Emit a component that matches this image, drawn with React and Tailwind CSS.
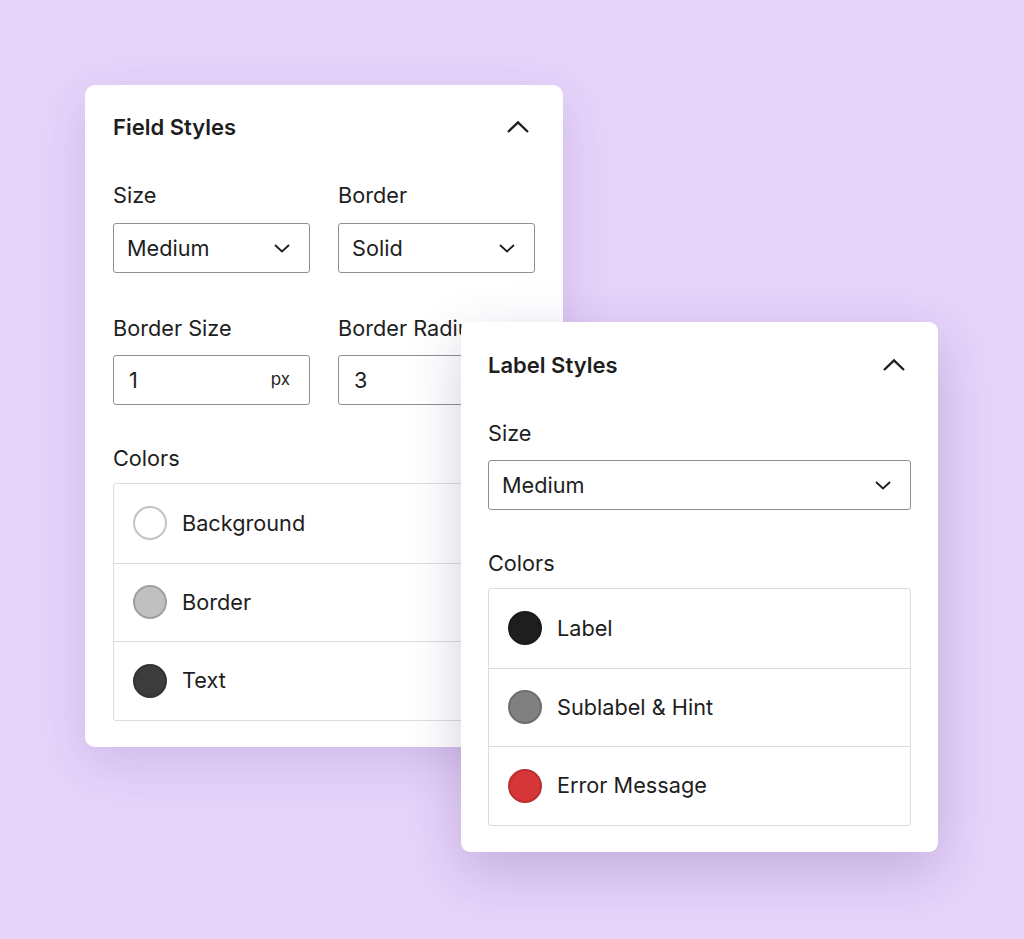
import React from "react";

const font = { fontFamily: "Inter, 'Noto Sans', sans-serif" };

function ChevronUp() {
  return (
    <svg width="24" height="24" viewBox="0 0 24 24" fill="none">
      <path d="M2 17 L12 7.5 L22 17" stroke="#1e1e1e" strokeWidth="2.4" />
    </svg>
  );
}

function ChevronDown() {
  return (
    <svg width="18" height="18" viewBox="0 0 18 18" fill="none">
      <path d="M2 6 L9 12.5 L16 6" stroke="#1e1e1e" strokeWidth="1.8" />
    </svg>
  );
}

function Header({ title }) {
  return (
    <div className="flex items-center justify-between h-[28px]">
      <span className="text-[22px] font-semibold text-[#1e1e1e] leading-[28px]">{title}</span>
      <span className="w-[34px] flex justify-center">
        <ChevronUp />
      </span>
    </div>
  );
}

function Label({ children, className = "" }) {
  return (
    <div className={"text-[21.7px] leading-[28px] text-[#1e1e1e] whitespace-nowrap " + className}>{children}</div>
  );
}

function Select({ value }) {
  return (
    <div className="h-[50px] border border-[#8c8f94] rounded-[3px] flex items-center justify-between pl-[13px] pr-[18px] bg-white">
      <span className="text-[21.7px] text-[#1e1e1e]">{value}</span>
      <ChevronDown />
    </div>
  );
}

function Input({ value, unit }) {
  return (
    <div className="h-[50px] border border-[#8c8f94] rounded-[3px] flex items-center justify-between pl-[15px] pr-[19px] bg-white">
      <span className="text-[21.7px] text-[#1e1e1e]">{value}</span>
      {unit && <span className="text-[17px] text-[#1e1e1e]">{unit}</span>}
    </div>
  );
}

function ColorList({ items }) {
  return (
    <div className="border border-[#dcdcde] rounded-[3px] flex flex-col">
      {items.map((it, i) => (
        <div
          key={it.label}
          className={
            "h-[78.5px] flex items-center pl-[19px] gap-[15px] " + (i > 0 ? "border-t border-[#dcdcde]" : "")
          }
        >
          <span
            className="w-[34px] h-[34px] rounded-full border-2"
            style={{ backgroundColor: it.bg, borderColor: it.border }}
          />
          <span className="text-[21.7px] text-[#1e1e1e]">{it.label}</span>
        </div>
      ))}
    </div>
  );
}

export default function App() {
  return (
    <div className="relative w-[1024px] h-[939px] bg-[#e6d4fb] overflow-hidden" style={font}>
      <div className="absolute left-[85px] top-[85px] w-[478px] h-[662px] bg-white rounded-[10px] px-[28px] pt-[28px] shadow-[0_16px_50px_rgba(90,50,130,0.16)]">
        <Header title="Field Styles" />
        <div className="grid grid-cols-2 gap-x-[28px] mt-[40px]">
          <div>
            <Label>Size</Label>
            <div className="mt-[14px]">
              <Select value="Medium" />
            </div>
          </div>
          <div>
            <Label>Border</Label>
            <div className="mt-[14px]">
              <Select value="Solid" />
            </div>
          </div>
        </div>
        <div className="grid grid-cols-2 gap-x-[28px] mt-[41px]">
          <div>
            <Label>Border Size</Label>
            <div className="mt-[13px]">
              <Input value="1" unit="px" />
            </div>
          </div>
          <div>
            <Label>Border Radius</Label>
            <div className="mt-[13px]">
              <Input value="3" unit="px" />
            </div>
          </div>
        </div>
        <Label className="mt-[39px]">Colors</Label>
        <div className="mt-[11px]">
          <ColorList
            items={[
              { label: "Background", bg: "#ffffff", border: "#c3c3c3" },
              { label: "Border", bg: "#c0c0c0", border: "#a0a0a0" },
              { label: "Text", bg: "#3c3c3c", border: "#333333" },
            ]}
          />
        </div>
      </div>

      <div className="absolute left-[461px] top-[322px] w-[477px] h-[530px] bg-white rounded-[9px] px-[27px] pt-[29px] shadow-[0_18px_55px_rgba(60,30,100,0.22)]">
        <Header title="Label Styles" />
        <Label className="mt-[40px]">Size</Label>
        <div className="mt-[13px]">
          <Select value="Medium" />
        </div>
        <Label className="mt-[39px]">Colors</Label>
        <div className="mt-[11px]">
          <ColorList
            items={[
              { label: "Label", bg: "#1e1e1e", border: "#1a1a1a" },
              { label: "Sublabel & Hint", bg: "#808080", border: "#6e6e6e" },
              { label: "Error Message", bg: "#d63638", border: "#b83030" },
            ]}
          />
        </div>
      </div>
    </div>
  );
}
